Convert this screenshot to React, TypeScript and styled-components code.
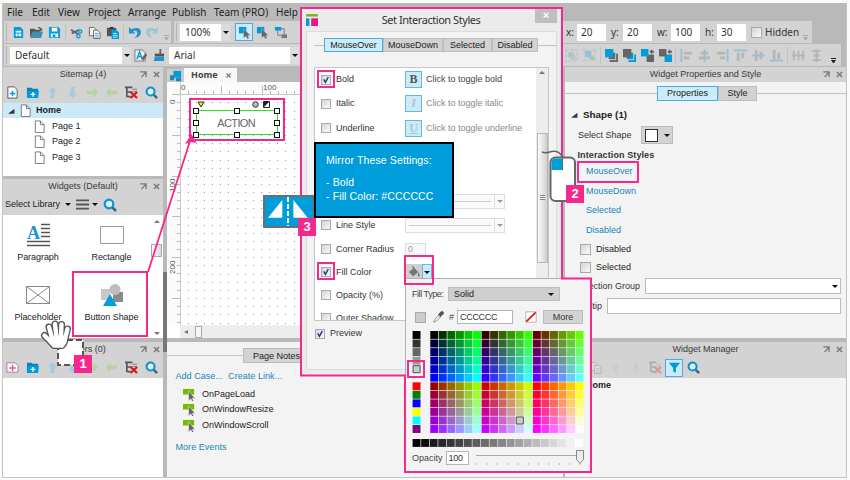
import React from "react";
import styled, { createGlobalStyle, css } from "styled-components";

const PINK = "#f5298c";
const BLUE = "#009ddc";
const GREY = "#d3d3d3";
const BAND = "#b9b9b9";
const PANE = "#f3f3f3";
const INK = "#666";

const Global = createGlobalStyle`
  * { box-sizing: border-box; }
  body { margin: 0; background: #fafafa; font: 9px/11px "Liberation Sans", Arial, sans-serif; color: #333; }
  svg { display: block; flex: none; }
`;

/* ---------- window frame ---------- */
const Page = styled.div`
  position: relative; width: 850px; height: 480px; padding: 3px 3px 2px 2px; overflow: hidden;
`;
const Window = styled.div`
  height: 475px; border: solid #c4c4c4; border-width: 0 1px 1px; background: ${BAND};
  display: flex; flex-direction: column;
`;
const MenuBar = styled.nav`
  height: 18px; display: flex; padding-left: 4px; align-items: center;
  font: 10px/18px "Noto Sans", sans-serif; color: #222;
`;
const MenuItem = styled.span<{ $w: number }>`width: ${p => p.$w}px; white-space: nowrap;`;
const ToolRow = styled.div`height: 23px; display: flex; padding-left: 1px; align-items: flex-start;`;
const ToolGroup = styled.div<{ $w: number; $gap?: number }>`
  width: ${p => p.$w}px; height: 22px; margin-right: ${p => p.$gap || 0}px; background: ${GREY};
  display: flex; align-items: center; overflow: hidden; flex: none;
`;
const Grip = styled.i`width: 1px; height: 18px; margin: 0 2px 0 2px; background: #b4b4b4; flex: none;`;
const Divider = styled.i<{ $w?: number }>`
  width: 1px; height: 17px; margin: 0 ${p => ((p.$w || 4) - 1) / 2}px; background: #c3c3c3; flex: none;
`;
const Slot = styled.span<{ $w?: number; $on?: boolean; $dim?: boolean }>`
  width: ${p => p.$w || 18}px; height: 18px; flex: none; display: flex; align-items: center; justify-content: center;
  opacity: ${p => (p.$dim ? 0.3 : 1)};
  ${p => p.$on && css`border: 1px solid #4fa9e8; background: #cdeaf9;`}
`;
const Combo = styled.div<{ $w: number; $ml?: number }>`
  width: ${p => p.$w}px; height: 17px; margin-left: ${p => p.$ml || 0}px; padding-left: 5px; background: #fff; flex: none;
  display: flex; align-items: center; justify-content: space-between;
  font: 10px/16px "Noto Sans", sans-serif; color: #333;
`;
const ComboEnd = styled.span`
  width: 9px; height: 17px; background: #dcdcdc; display: flex; align-items: center; justify-content: center;
`;
const Caret = styled.i<{ $c?: string }>`
  width: 0; height: 0; border: solid transparent; border-width: 3px 3px 0; border-top-color: ${p => p.$c || "#111"}; flex: none;
`;
const NumLabel = styled.span<{ $w: number }>`
  width: ${p => p.$w}px; font: 10px/16px "Noto Sans", sans-serif; color: #333;
`;
const NumField = styled.span`
  width: 29px; height: 17px; padding-left: 4px; margin-right: 5px; background: #fff;
  font: 10px/16px "Noto Sans", sans-serif; color: #333; flex: none;
`;
const Check = styled.span<{ $s?: number; $mr?: number }>`
  width: ${p => p.$s || 10}px; height: ${p => p.$s || 10}px; margin-right: ${p => p.$mr ?? 5}px;
  border: 1px solid #aaa; background: linear-gradient(135deg, #d4d4d4, #fafafa); flex: none;
  display: flex; align-items: center; justify-content: center;
`;
const Overflow = styled.i`
  width: 5px; margin: 11px auto 0; border-top: 1px solid currentColor; color: #222;
  &::after { content: ""; display: block; margin-top: 1px; border: solid transparent; border-width: 3px 2.5px 0; border-top-color: currentColor; }
`;
const FadedOverflow = styled(Overflow)`color: #aaa;`;

/* ---------- body columns ---------- */
const Body = styled.div`flex: 1; display: grid; grid-template-columns: 160px 4px 396px 2px 281px; min-height: 0;`;
const Column = styled.div`display: flex; flex-direction: column; min-width: 0;`;
const Splitter = styled.div`
  background: ${BAND}; padding-top: 205px;
  &::before { content: ""; display: block; height: 80px; background: #777; }
`;
const Head = styled.div`
  height: 15px; background: ${GREY}; display: grid; grid-template-columns: 1fr auto 1fr;
  line-height: 15px; color: #3a3a3a; flex: none;
`;
const HeadText = styled.span`grid-column: 2; white-space: nowrap;`;
const HeadTools = styled.span`display: flex; gap: 4px; align-items: center; justify-content: flex-end; padding-right: 2px;`;
const Strip = styled.div<{ $h: number }>`
  height: ${p => p.$h}px; background: ${GREY}; display: flex; align-items: center; flex: none;
`;
const Band = styled.div<{ $h?: number }>`height: ${p => p.$h || 3}px; background: ${BAND}; flex: none;`;
const White = styled.div<{ $h: number }>`height: ${p => p.$h}px; background: #fff; flex: none;`;
const TreeRow = styled.div<{ $sel?: boolean }>`
  height: ${p => (p.$sel ? 15 : 15.5)}px; padding-left: ${p => (p.$sel ? 4 : 30)}px; display: flex; align-items: center; gap: ${p => (p.$sel ? 4 : 6)}px;
  background: ${p => (p.$sel ? "#cbe9f7" : "none")}; font-weight: ${p => (p.$sel ? "bold" : "normal")}; color: #222;
`;
const Tree = styled.div`display: flex; flex-direction: column;`;
const TreePages = styled.div`padding-top: .5px;`;
const Library = styled.div`height: 123px; display: grid; grid-template-columns: 147px 13px; background: #fff; flex: none;`;
const WidgetGrid = styled.div`display: grid; grid-template-columns: 70px 77px; grid-template-rows: 60px 60px; padding-top: 6px;`;
const WidgetCell = styled.div`
  display: flex; flex-direction: column; align-items: center; white-space: nowrap; color: #222; letter-spacing: -.05px;
`;
const WidgetArt = styled.div`height: 28px; display: flex; align-items: center; margin-bottom: 3px;`;
const LibScroll = styled.div`
  display: flex; flex-direction: column; align-items: center; justify-content: space-between; padding: 5px 0 6px;
`;
const LibThumb = styled.i`width: 11px; height: 13px; border: 1px solid #aaa; background: linear-gradient(90deg, #fff, #d8d8d8); margin-bottom: 55px;`;
const UpCaret = styled(Caret)`transform: rotate(180deg);`;
const StripText = styled.span`padding: 0 5px 0 2px; color: #222; white-space: nowrap;`;

/* ---------- canvas ---------- */
const DocTabs = styled.div`height: 15px; background: ${BAND}; display: flex; align-items: flex-end;`;
const DocHome = styled.div`width: 17px; height: 13px; background: #ccc; display: flex; align-items: center; justify-content: center;`;
const DocTab = styled.div`
  width: 53px; height: 14px; background: #f8f8f8; padding: 0 5px 0 7px; display: flex; align-items: center; justify-content: space-between;
  font: bold 9px/14px "Noto Sans", sans-serif; color: #444;
`;
const CanvasArea = styled.div`height: 243px; background: #fff;`;
const HScroll = styled.div`
  height: 13px; margin-left: 13px; background: #ededed; display: flex; align-items: center; padding-left: 4px; gap: 7px;
`;
const HWrap = styled.div`background: #fff;`;
const HThumb = styled.i`width: 7px; height: 12px; border: 1px solid #aaa; background: #f6f6f6;`;
const LeftCaret = styled.i`border: solid transparent; border-width: 2.5px 4px 2.5px 0; border-right-color: #777;`;
const Notes = styled.div`flex: 1; background: ${PANE}; padding-top: 6px;`;
const NotesTab = styled.div`
  width: 62px; height: 15px; margin-left: 76px; border: 1px solid #bbb; background: ${GREY}; padding-left: 9px; line-height: 14px; white-space: nowrap; color: #222;
`;
const NotesLine = styled.div`display: flex; align-items: center; height: 15px; background: linear-gradient(#c8c8c8, #c8c8c8) 0 7px / 100% 1px no-repeat;`;
const Links = styled.div<{ $mt: number }>`margin: ${p => p.$mt}px 0 0 8.5px; display: flex; gap: 5px; color: #1685bd; letter-spacing: .05px;`;
const Events = styled.div`padding: 5px 0 0 16px;`;
const EventRow = styled.div`height: 15.5px; display: flex; align-items: center; gap: 6px; color: #222;`;

/* ---------- right column ---------- */
const Props = styled.div`height: 256px; background: ${PANE}; padding-top: 4px; flex: none;`;
const Tabs = styled.div<{ $l: number; $r: number }>`
  display: grid; grid-template-columns: ${p => p.$l}px auto ${p => p.$r}px; align-items: center;
  &::before, &::after { content: ""; height: 1px; background: #c2c2c2; }
`;
const TabSet = styled.div`display: flex;`;
const Tab = styled.span<{ $w: number; $h: number; $on?: boolean }>`
  width: ${p => p.$w}px; height: ${p => p.$h}px; line-height: ${p => p.$h - 2}px; text-align: center; color: #222;
  border: 1px solid ${p => (p.$on ? "#3fb0e0" : "#bdbdbd")}; background: ${p => (p.$on ? "#cdebf8" : "#d2d2d2")};
`;
const Section = styled.div`
  height: 12px; margin: 8px 0 0 5px; display: flex; align-items: center; gap: 5px; font: bold 9.8px/12px "Liberation Sans", sans-serif; color: #222;
`;
const ShapeRow = styled.div`margin: 5px 0 0 13px; display: flex; align-items: center; gap: 9px; height: 18px;`;
const ShapeBtn = styled.div`
  width: 32px; height: 18px; border: 1px solid #bbb; background: ${GREY}; display: flex; align-items: center; justify-content: space-between; padding: 0 2px 0 3px;
`;
const ShapeBox = styled.i`width: 13px; height: 13px; border: 1px solid #333; background: #fff;`;
const SubHead = styled.div`margin: 5px 0 0 12.5px; font-weight: bold; line-height: 12px; letter-spacing: .1px;`;
const LinkList = styled.div`padding: 1px 0 0 21px; color: #1685bd;`;
const LinkItem = styled.div`height: 19.6px; line-height: 19.6px;`;
const CheckRow = styled.div`height: 18px; padding-left: 15px; display: flex; align-items: center; color: #222;`;
const FieldRow = styled.div<{ $label: number }>`
  height: 20px; display: grid; grid-template-columns: ${p => p.$label}px 1fr; padding-right: 5px; align-items: center; column-gap: 5px; text-align: right;
`;
const Field = styled.div`height: 16px; border: 1px solid #bbb; background: #fff; display: flex; align-items: center; justify-content: flex-end; padding-right: 2px;`;
const Manager = styled.div`flex: 1; background: ${PANE}; padding: 2px 0 0 21px; font-weight: bold; color: #222;`;

/* ---------- dialog ---------- */
const Dialog = styled.section`
  position: absolute; left: 301px; top: 8px; width: 261px; height: 368px; background: #ebebeb; padding-left: 5px;
`;
const TitleBar = styled.header`height: 23px; display: grid; grid-template-columns: 13px 1fr 22px 5px; align-items: center;`;
const Title = styled.h1`margin: 0; padding-left: 8px; font: 11px/22px "Noto Sans", sans-serif; letter-spacing: -.45px; color: #333; text-align: center;`;
const Close = styled.span`align-self: start; height: 15px; background: #bfbfbf; color: #fff; font: bold 11px/14px "Liberation Sans", sans-serif; text-align: center;`;
const Inner = styled.div`width: 251px; height: 339px; border: 1px solid #dcdcdc; background: ${PANE}; padding: 6px 0 0 7px;`;
const StyleList = styled.div`
  width: 235px; height: 254px; margin-top: 14.5px; border: 1px solid #c6c6c6; background: #fff; overflow: hidden;
  display: grid; grid-template-columns: 1fr 12px;
`;
const OptRows = styled.div``;
const OptRow = styled.div<{ $h?: number }>`
  height: ${p => p.$h || 24.3}px; display: grid; grid-template-columns: 21px 69px 1fr; align-items: center; white-space: nowrap;
`;
const OptCheck = styled.span`padding-left: 6px;`;
const OptValue = styled.span<{ $dim?: boolean }>`display: flex; align-items: center; gap: 4px; color: ${p => (p.$dim ? "#888" : "#444")};`;
const Toggle = styled.b<{ $dim?: boolean }>`
  width: 17px; height: 17px; border: 1px solid #5fb9e2; background: #cdeaf6; color: ${p => (p.$dim ? "#a5c9d6" : "#555")};
  font: bold 12px/15px "Liberation Serif", serif; text-align: center;
`;
const LineSelect = styled.span`
  width: 100px; height: 15px; border: 1px solid #ddd; background: #fafafa; display: grid; grid-template-columns: 1fr 10px; align-items: center; padding-left: 3px; column-gap: 3px;
  &::before { content: ""; height: 1px; background: #ccc; }
`;
const LineEnd = styled.span`height: 13px; border-left: 1px solid #ddd; display: flex; align-items: center; justify-content: center;`;
const Radius = styled.span`width: 21px; height: 13px; border: 1px solid #ddd; background: #f8f8f8; padding-left: 2px; color: #999; line-height: 11px;`;
const FillBtn = styled.span`width: 27px; height: 16px; background: #cfcfcf; display: flex; align-items: center; justify-content: space-between; padding-left: 3px;`;
const FillDrop = styled.span`width: 10px; height: 16px; border: 1px solid #5fb9e2; background: #cdeaf6; display: flex; align-items: center; justify-content: center;`;
const Track = styled.div`background: #ededed; display: flex; flex-direction: column; align-items: center; padding-top: 3px;`;
const Thumb = styled.i`
  width: 11px; height: 130px; margin-top: 59px; border: 1px solid #b5b5b5; background: linear-gradient(90deg, #fafafa, #d0d0d0); display: flex; align-items: center; justify-content: center;
  &::after { content: ""; width: 5px; height: 5px; background: repeating-linear-gradient(#888 0 1px, #eee 1px 2px); }
`;
const Preview = styled.div`height: 26px; display: flex; align-items: center; padding-left: 1px;`;

/* ---------- colour popup ---------- */
const Popup = styled.section`
  position: absolute; left: 405px; top: 278px; width: 186px; height: 194px; border: 1px solid #b0b0b0; background: ${PANE}; padding: 8px 6px 0 6px;
`;
const PopRow = styled.div<{ $h: number; $mb: number }>`height: ${p => p.$h}px; margin-bottom: ${p => p.$mb}px; display: flex; align-items: center; color: #444;`;
const PopLabel = styled.span`width: 36px; letter-spacing: -.45px; padding-top: 1px; white-space: nowrap; flex: none;`;
const Spacer = styled.i<{ $w: number }>`width: ${p => p.$w}px; flex: none;`;
const Solid = styled.span`
  width: 112px; height: 14px; border: 1px solid #bdbdbd; background: #cfcfcf; display: flex; align-items: center; justify-content: space-between; padding: 0 5px; color: #222; flex: none;
`;
const Swatch = styled.i`width: 11px; height: 11px; border: 1px solid #aaa; background: #ccc;`;
const PopInput = styled.span<{ $w: number }>`width: ${p => p.$w}px; height: 14px; border: 1px solid #b5b5b5; background: #fff; padding-left: 2px; line-height: 12px; color: #333; letter-spacing: -.3px;`;
const More = styled.span`width: 40px; height: 14px; border: 1px solid #bbb; background: ${GREY}; line-height: 12px; text-align: center; color: #333;`;

/* ---------- callouts ---------- */
const Outline = styled.i<{ $x: number; $y: number; $w: number; $h: number }>`
  position: absolute; left: ${p => p.$x}px; top: ${p => p.$y}px; width: ${p => p.$w}px; height: ${p => p.$h}px; border: 2px solid ${PINK};
`;
const Badge = styled.b<{ $x: number; $y: number }>`
  position: absolute; left: ${p => p.$x}px; top: ${p => p.$y}px; width: 18px; height: 18px; background: ${PINK};
  color: #fff; font: bold 13px/18px "Liberation Sans", sans-serif; text-align: center;
`;
const Note = styled.aside`
  position: absolute; left: 314px; top: 142px; width: 140px; height: 76px; border: 2px solid #000; background: ${BLUE}; padding: 9px 0 0 10px;
  color: #fff; font: 10.5px/14px "Liberation Sans", sans-serif; letter-spacing: .12px;
  p { margin: 0 0 8px; }
`;
const Marks = styled.svg`position: absolute; left: 0; top: 0;`;

/* ---------- icons, drawn on a 14-unit square ---------- */
const art: Record<string, React.ReactNode> = {
  new: <><path d="M2 1h7l3 3v9H2z" fill={BLUE} /><path d="M4 5h6v2H4zM4 8h2v3H4zM7 8h3v3H7z" fill="#fff" /></>,
  open: <><path d="M0 3h5l1 1h5v3H3l-3 5z" fill="#555" /><path d="M3 6h11l-2 7H0z" fill="#3f8fb4" /><path d="M8 2q3-2 4 1l1-1v3h-3l1-1q-1-2-3-2" fill="#555" /></>,
  save: <><path d="M1 1h10l2 2v10H1z" fill={BLUE} /><path d="M4 2h6v4H4zM3 8h8v4H3z" fill="#fff" /><path d="M5 9h3v3H5z" fill={BLUE} /></>,
  cut: <><path d="M1 4l8 5M2 8l8-4" stroke={INK} strokeWidth="2" /><g fill="none" stroke="#209fd5" strokeWidth="1.6"><circle cx="11" cy="6" r="1.7" /><circle cx="9" cy="11" r="1.8" /></g></>,
  copy: <g fill="#f5f5f5" stroke={INK}><path d="M1.500 1.500h5l2 2v7h-7z" /><path d="M6 4.500h4l3 3v6H6z" /><path d="M7.500 8h4M7.500 10h4M7.500 12h4" stroke="#55a9cf" /></g>,
  paste: <><path d="M1 2h10v9H1z" fill="#555" /><path d="M4 1h4v2H4z" fill="#333" /><path d="M6 4h5l3 3v7H6z" fill={BLUE} /><path d="M7.500 8h4M7.500 10h5M7.500 12h5" stroke="#bde6f8" /></>,
  undo: <path d="M1 1v7h7L5.500 5.500Q10 4 10 8q0 2-3 5 7-1 7-6.500Q13 0 3.500 3.500z" fill="#2392c8" />,
  redo: <path d="M13 1v7H6l2.500-2.500Q4 4 4 8q0 2 3 5-7-1-7-6.500Q1 0 10.500 3.500z" fill="#9fc4d4" />,
  pick: <><path d="M1 1h8v7H1z" fill={BLUE} /><path d="M6 3v10l2.500-2 1.500 3 2-1-1.500-2.800H13.500z" fill="#666" stroke={GREY} strokeWidth=".4" /></>,
  flow: <g><path d="M1 1h7v4H1z" fill={BLUE} /><path d="M8 9h6v4H8z" fill="#777" /><path d="M4 5v5h4M8 3h3v6" stroke="#777" fill="none" /></g>,
  styleA: <><path d="M1 1h8l3 3v9H1z" fill="#eee" stroke="#777" /><path d="M3 11l3-8 3 8M4 8h4" stroke={BLUE} strokeWidth="1.500" fill="none" /><path d="M8 10l5-6 1 3-4 6z" fill="#666" /></>,
  brush: <><path d="M8 0h2v6H8z" fill="#666" /><path d="M3 5h10v3H3z" fill="#555" /><path d="M3 8h10v5H2z" fill="#2195c9" /></>,
  addPage: <><path d="M2 1h7l3 3v9H2z" fill="#fff" stroke="#555" /><path d="M7 5v6M4 8h6" stroke={BLUE} strokeWidth="1.600" /></>,
  addMaster: <><path d="M1 2h9l3 3v7H1z" fill="#fff" stroke="#b27196" /><path d="M7 4v7M3.500 7.500h7" stroke="#dc58a2" strokeWidth="1.600" /></>,
  addFolder: <><path d="M1 2h5l1 1h6v9H1z" fill="#167fb0" /><path d="M2 5h12l-1 8H1z" fill={BLUE} /><path d="M7.500 6.500v5M5 9h5" stroke="#fff" strokeWidth="1.400" /></>,
  up: <path d="M7 1l5 5H9v7H5V6H2z" fill="#a3cbdc" />,
  down: <path d="M7 13L2 8h3V1h4v7h3z" fill="#a3cbdc" />,
  right: <path d="M13 7L8 12V9H1V5h7V2z" fill="#b5d3a0" />,
  left: <path d="M1 7l5-5v3h7v4H6v3z" fill="#b5d3a0" />,
  del: <><path d="M0 1.500h8M2 2v10M3 6.500h5M3 11.500h3" stroke="#555" strokeWidth="1.800" /><path d="M8 3.500h5M9 6h4" stroke="#777" /><path d="M6 6.500l7 6.500M13 6.500L6 13" stroke="#d8171b" strokeWidth="2.300" /></>,
  find: <><circle cx="6" cy="6" r="4.300" fill="#dff2fa" stroke="#0a93d0" strokeWidth="2.200" /><path d="M9.500 9.500L13 13" stroke="#386a82" strokeWidth="2.600" /></>,
  funnel: <path d="M1 2h12L8.500 7.500V13l-3-2V7.500z" fill={BLUE} />,
  page: <path d="M2.500 1h5.500l4 4v8.500H2.500z M8 1v4h4" fill="#fff" stroke="#777" />,
  twisty: <path d="M13 3v9H2z" fill="#333" />,
  float: <path d="M3 3h8v8M11 3l-7 8M2 3h9" stroke="#777" strokeWidth="2" fill="none" />,
  close: <path d="M3 3l8 8M11 3l-8 8" stroke="#777" strokeWidth="2.200" />,
  lines: <path d="M0 2.500h14M0 7h14M0 11.500h14" stroke="#555" strokeWidth="2" />,
  front: <><path d="M5 5h9v9H5z" fill={INK} /><path d="M3 3h9v9H3z" fill={GREY} /><path d="M4 4h7v7H4z" fill={INK} /><path d="M0 0h9v9H0z" fill={BLUE} /></>,
  back: <><path d="M6 6h8v8H6z" fill={BLUE} /><path d="M3 3h9v9H3z" fill={GREY} /><path d="M4 4h7v7H4z" fill={BLUE} /><path d="M0 0h9v9H0z" fill={INK} /></>,
  fwd: <><path d="M6 6h8v8H6z" fill={INK} /><path d="M0 0h8v8H0z" fill={BLUE} /><path d="M9 3l3-3v2h2v2h-2v2z" fill={INK} /></>,
  bwd: <><path d="M6 6h8v8H6z" fill={BLUE} /><path d="M0 0h8v8H0z" fill={INK} /><path d="M9 3l3-3v2h2v2h-2v2z" fill={INK} /></>,
  group: <g fill="none" stroke="#6fa9bf"><path d="M1 1h12v12H1z" strokeDasharray="3 2" strokeWidth="1.500" /><path d="M4 4h5v5H4z" fill={BLUE} /><path d="M7 7h4v4H7z" fill="#999" /></g>,
  ungroup: <g><path d="M2 2h7v7H2z" fill={BLUE} /><path d="M7 7h5v5H7z" fill="#888" /><path d="M0 1h3M0 12h4M10 1h4v4M13 9v4" stroke="#6fa9bf" fill="none" strokeWidth="1.500" /></g>,
  alL: <><path d="M1.500 0v14" stroke={BLUE} strokeWidth="2" /><path d="M4 3h9v3H4zM4 8h6v3H4z" fill="#777" /></>,
  alC: <><path d="M7 0v14" stroke={BLUE} strokeWidth="2" /><path d="M3 3h8v3H3zM1 8h12v3H1z" fill="#777" /></>,
  alR: <><path d="M12.500 0v14" stroke={BLUE} strokeWidth="2" /><path d="M1 3h9v3H1zM4 8h6v3H4z" fill="#777" /></>,
  alT: <><path d="M0 1.500h14" stroke={BLUE} strokeWidth="2" /><path d="M3 4h3v9H3zM8 4h3v6H8z" fill="#777" /></>,
  alM: <><path d="M0 7h14" stroke={BLUE} strokeWidth="2" /><path d="M3 1h3v12H3zM8 3h3v8H8z" fill="#777" /></>,
  alB: <><path d="M0 12.500h14" stroke={BLUE} strokeWidth="2" /><path d="M3 1h3v10H3zM8 4h3v7H8z" fill="#777" /></>,
  diH: <><path d="M2 2v10M12 2v10" stroke="#777" strokeWidth="2" /><path d="M0 7h14M7 2v10" stroke="#777" strokeWidth="2" /></>,
  diV: <><path d="M2 2h10M2 12h10" stroke="#777" strokeWidth="2" /><path d="M7 0v14M4 7h6" stroke="#777" strokeWidth="2.500" /></>,
  tick: <path d="M3 6l3 5 5-9" stroke="#2b2b86" strokeWidth="2.400" fill="none" />,
  bucket: <><path d="M1 7l6-5 5 5-6 5z" fill="#777" /><path d="M5 0l4 6" stroke="#777" strokeWidth="1.500" /><path d="M12 7q2 3 1.500 5h-2z" fill="#666" /></>,
  dropper: <><path d="M2 13l1-3 5-5 2 2-5 5z" fill="#eee" stroke="#888" /><path d="M7 4l4-4q3 0 3 3l-4 4z" fill="#555" /></>,
  noFill: <><path d="M1 1h12v12H1z" fill="#fff" stroke="#aaa" /><path d="M1.500 12.500l11-11" stroke="#e0181c" strokeWidth="2" /></>,
  event: <><path d="M0 1h12v6H0z" fill="#6fbe00" /><path d="M6 3v11l2.500-2.300 1.500 3 1.500-.8-1.400-2.900H13z" fill="#666" stroke="#eee" strokeWidth=".6" /></>,
  docHome: <><path d="M4 1h9v8H4z" fill={BLUE} /><path d="M0 6h5v6H0zM7 9h6v4H7z" fill="#2786b0" /></>,
  logo: <><path d="M0 0h14v3H0z" fill="#76b82a" /><path d="M0 5h4v9H0z" fill={BLUE} /><path d="M6 5h8v9H6z" fill="#ed1489" /></>,
};
const Icon = ({ n, s = 13 }: { n: string; s?: number }) => (
  <svg width={s} height={s} viewBox="0 0 14 14" fill="none">{art[n]}</svg>
);
const Icons = ({ names, w, dim }: { names: string; w?: number; dim?: boolean }) => (
  <>{names.split(" ").map((n, i) => <Slot key={i} $w={w} $dim={dim}><Icon n={n} /></Slot>)}</>
);

const PanelHead = ({ children }: { children: React.ReactNode }) => (
  <Head><HeadText>{children}</HeadText><HeadTools><Icon n="float" s={9} /><Icon n="close" s={9} /></HeadTools></Head>
);

const CheckBox = ({ on, s, mr }: { on?: boolean; s?: number; mr?: number }) => (
  <Check $s={s} $mr={mr}>{on && <Icon n="tick" s={8} />}</Check>
);

const Option = ({ label, on, h, dim, children }: { label?: string; on?: boolean; h?: number; dim?: boolean; children?: React.ReactNode }) => (
  <OptRow $h={h}>
    <OptCheck><CheckBox on={on} mr={0} /></OptCheck><span>{label}</span><OptValue $dim={dim}>{children}</OptValue>
  </OptRow>
);

/* ---------- drawing surface: rulers, dot grid and the selected shape ---------- */
const UNIT = 8.15;
const range = (n: number) => Array.from({ length: n }, (_, i) => i);
const Surface = () => (
  <svg width="396" height="243" viewBox="167 82 396 243" shapeRendering="crispEdges">
    <path d="M167 82h396v12H167zM167 82h13v243h-13z" fill="#fbfbfb" />
    <path d="M180.500 82v243M180 94.500h383" stroke="#c8c8c8" />
    {range(16).map(i => <path key={i} d={`M${Math.round(180 + i * UNIT)}.5 ${i % 5 ? 91 : 86}v${i % 5 ? 3 : 8}`} stroke="#bbb" />)}
    {range(29).map(i => <path key={i} d={`M${i % 5 ? 177 : 172} ${Math.round(94 + i * UNIT)}.5h${i % 5 ? 3 : 8}`} stroke="#bbb" />)}
    {range(28).map(r => range(15).map(c => (
      <rect key={`${r}-${c}`} x={Math.round(179.500 + (c + 1) * UNIT)} y={Math.round(94.300 + (r + 1) * UNIT)} width="1" height="1" fill="#8d8df0" />
    )))}
    <g fontFamily="Liberation Sans" fontSize="8" fill="#555">
      <text x="181" y="90">0</text><text x="263" y="90">100</text>
      <text transform="translate(175 104) rotate(-90)">0</text>
      <text transform="translate(175 192) rotate(-90)">100</text>
      <text transform="translate(175 274) rotate(-90)">200</text>
    </g>
    <path d="M196.500 110.500h81v24h-81z" fill="#fff" stroke="#2be02b" />
    <text x="236.500" y="126.500" textAnchor="middle" fontFamily="Liberation Sans" fontSize="11" textLength="38.500" fill="#666" shapeRendering="auto">ACTION</text>
    {[[196, 110], [237, 110], [277, 110], [196, 122], [277, 122], [196, 134], [237, 134], [277, 134]].map(([x, y]) => (
      <rect key={`${x}-${y}`} x={x - 2.500} y={y - 2} width="5" height="5" fill="#fff" stroke="#111" />
    ))}
    <g shapeRendering="auto">
      <path d="M198 102h6l-3 5z" fill="#fd0" stroke="#333" />
      <circle cx="255.500" cy="104.500" r="2.800" fill="#bbb" stroke="#333" />
      <path d="M263.500 101.500h6v6h-6z" fill="#fff" stroke="#222" /><path d="M264 107v-5h5z" fill="#222" />
    </g>
  </svg>
);

/* ---------- colour palette: web-safe cubes plus quick swatches and greys ---------- */
const CELL = 8.550;
const quick = ["#000", "#333", "#666", "#999", "#ccc", "", "#f00", "#008000", "#00f", "#ff0", "#0ff", "#800080"];
const Palette = () => (
  <svg width="172" height="117" viewBox="0 0 172 117">
    {quick.map((c, i) => c && <rect key={i} x=".6" y={i * CELL} width="7.900" height="7.900" fill={c} />)}
    {range(12).map(r => range(18).map(c => {
      const red = (Math.floor(c / 6) + (r > 5 ? 3 : 0)) * 51;
      return <rect key={`${r}-${c}`} x={18.300 + c * CELL} y={r * CELL} width="7.900" height="7.900" fill={`rgb(${red},${(c % 6) * 51},${(r % 6) * 51})`} />;
    }))}
    {range(20).map(i => { const v = Math.round(i * 13.4); return <rect key={i} x={.6 + i * CELL} y="108" width="7.900" height="7.900" fill={`rgb(${v},${v},${v})`} />; })}
    <path d="M1.100 34.700h7v7h-7zM104.300 86h7v7h-7z" fill="#ccc" stroke="#555" />
  </svg>
);

const Slider = () => (
  <svg width="110" height="18" viewBox="475 448 110 18">
    <path d="M477 454.500h104" stroke="#aaa" />
    {range(11).map(i => <path key={i} d={`M${477.500 + i * 10.350} 462v2`} stroke="#bbb" />)}
    <path d="M577.500 449.500h7v9l-3.500 4-3.500-4z" fill="#ececec" stroke="#888" />
  </svg>
);

/* ---------- open hand: the same strokes laid twice, outline then fill ---------- */
const HandShape = ({ color, w }: { color: string; w: number }) => (
  <g stroke={color} strokeWidth={w} strokeLinecap="round" strokeLinejoin="round" fill={color}>
    <path d="M44.500 335.500L52 343M49 327l3 11M55 324l1.500 13M61.500 324.500L61 337M67.500 329l-2.500 10" fill="none" />
    <path d="M52.500 338h12.500q0 5-3 7.500H54q-2-2-3.500-4z" />
  </g>
);

const widgets: [string, React.ReactNode][] = [
  ["Paragraph", <svg width="24" height="24" viewBox="0 0 24 24"><text x="1" y="15.500" fontFamily="Liberation Serif" fontWeight="bold" fontSize="18" textLength="13" lengthAdjust="spacingAndGlyphs" fill="#1597d1">A</text><path d="M15 1.500h9M15 5.500h9M15 9.500h9M15 13.500h9M1 18.500h23M1 22.500h23" stroke="#555" strokeWidth="1.500" /></svg>],
  ["Rectangle", <svg width="24" height="18"><path d="M.5.5h23v17H.5z" fill="#fff" stroke="#999" /></svg>],
  ["Placeholder", <svg width="24" height="18"><path d="M.5.5h23v17H.5zL23.500 17.500M23.500.5L.5 17.500" fill="#fff" stroke="#888" /></svg>],
  ["Button Shape", <svg width="24" height="24" viewBox="0 0 24 24"><path d="M1 6h9v11H1z" fill="#c8c8c8" /><path d="M13 9h10v10H13z" fill="#8a8a8a" /><circle cx="15" cy="6.500" r="5.500" fill="#bdbdbd" /><path d="M10 11l7 12H3z" fill={BLUE} /></svg>],
];

export default function App() {
  return (
    <Page>
      <Global />
      <Window>
        <MenuBar>
          {([["File", 25], ["Edit", 26], ["View", 30], ["Project", 40], ["Arrange", 44], ["Publish", 42], ["Team (PRO)", 62], ["Help", 30]] as [string, number][]).map(([t, w]) => <MenuItem key={t} $w={w}>{t}</MenuItem>)}
        </MenuBar>
        <ToolRow>
          <ToolGroup $w={167} $gap={3}>
            <Grip /><Icons names="new open save" /><Divider $w={4.5} /><Icons names="cut copy paste" /><Divider /><Icons names="undo redo" /><FadedOverflow />
          </ToolGroup>
          <ToolGroup $w={383} $gap={3}>
            <Grip />
            <Combo $w={50} $ml={1}>100%<ComboEnd><Caret /></ComboEnd></Combo><Spacer $w={5} />
            <Slot $on><Icon n="pick" /></Slot><Icons names="pick flow" />
          </ToolGroup>
          <ToolGroup $w={252}>
            <Spacer $w={6} />
            <NumLabel $w={11}>x:</NumLabel><NumField>20</NumField>
            <NumLabel $w={12}>y:</NumLabel><NumField>20</NumField>
            <NumLabel $w={14}>w:</NumLabel><NumField>100</NumField>
            <NumLabel $w={12}>h:</NumLabel><NumField>30</NumField>
            <CheckBox s={11} mr={3} /><NumLabel $w={34}>Hidden</NumLabel><FadedOverflow />
          </ToolGroup>
        </ToolRow>
        <ToolRow>
          <ToolGroup $w={556}>
            <Grip /><Combo $w={121} $ml={1}>Default<ComboEnd><Caret /></ComboEnd></Combo>
            <Icons names="styleA brush" w={18.5} />
            <Combo $w={130} $ml={1}>Arial<ComboEnd><Caret /></ComboEnd></Combo>
          </ToolGroup>
          <ToolGroup $w={281}>
            <Spacer $w={2} /><Icons names="group ungroup" dim /><Divider />
            <Icons names="front back fwd bwd" /><Divider $w={3.5} />
            <Icons names="alL alC alR alT alM alB" dim /><Divider /><Icons names="diH diV" dim /><Overflow />
          </ToolGroup>
        </ToolRow>
        <Body>
          <Column>
            <PanelHead>Sitemap (4)</PanelHead>
            <Strip $h={21}><Icons names="addPage addFolder up down right left del find" w={19.8} /></Strip>
            <White $h={73}>
              <Tree>
                <TreeRow $sel><Icon n="twisty" s={8} /><Icon n="page" s={13} />Home</TreeRow>
                <TreePages>{[1, 2, 3].map(i => <TreeRow key={i}><Icon n="page" />Page {i}</TreeRow>)}</TreePages>
              </Tree>
            </White>
            <Band />
            <PanelHead>Widgets (Default)</PanelHead>
            <Strip $h={21}>
              <StripText>Select Library</StripText><Caret /><Spacer $w={5} /><Icon n="lines" /><Spacer $w={3} /><Caret /><Spacer $w={5} /><Icon n="find" s={14} />
            </Strip>
            <Library>
              <WidgetGrid>{widgets.map(([t, a]) => <WidgetCell key={t}><WidgetArt>{a}</WidgetArt>{t}</WidgetCell>)}</WidgetGrid>
              <LibScroll><UpCaret $c="#777" /><LibThumb /><Caret $c="#777" /></LibScroll>
            </Library>
            <Band $h={4} />
            <PanelHead>Masters (0)</PanelHead>
            <Strip $h={21}><Icons names="addMaster addFolder up down right left del find" w={19.8} /></Strip>
            <White $h={99} />
          </Column>
          <Splitter />
          <Column>
            <DocTabs><DocHome><Icon n="docHome" s={12} /></DocHome><DocTab>Home<Icon n="close" s={7} /></DocTab></DocTabs>
            <CanvasArea><Surface /></CanvasArea>
            <HWrap><HScroll><LeftCaret /><HThumb /></HScroll></HWrap>
            <Band $h={4} />
            <Notes>
              <NotesLine><NotesTab>Page Notes</NotesTab></NotesLine>
              <Links $mt={7.5}><span>Add Case...</span><span>Create Link...</span></Links>
              <Events>{["OnPageLoad", "OnWindowResize", "OnWindowScroll"].map(t => <EventRow key={t}><Icon n="event" />{t}</EventRow>)}</Events>
              <Links $mt={9}><span>More Events</span></Links>
            </Notes>
          </Column>
          <Band $h={410} />
          <Column>
            <PanelHead>Widget Properties and Style</PanelHead>
            <Props>
              <Tabs $l={92} $r={89}><TabSet><Tab $w={61} $h={15} $on>Properties</Tab><Tab $w={39} $h={15}>Style</Tab></TabSet></Tabs>
              <Section><Icon n="twisty" s={8} />Shape (1)</Section>
              <ShapeRow>Select Shape<ShapeBtn><ShapeBox /><Caret /></ShapeBtn></ShapeRow>
              <SubHead>Interaction Styles</SubHead>
              <LinkList>{["MouseOver", "MouseDown", "Selected", "Disabled"].map(t => <LinkItem key={t}>{t}</LinkItem>)}</LinkList>
              <CheckRow><CheckBox s={11} />Disabled</CheckRow>
              <CheckRow><CheckBox s={11} />Selected</CheckRow>
              <FieldRow $label={75}><span>Selection Group</span><Field><Caret /></Field></FieldRow>
              <FieldRow $label={37}><span>Tooltip</span><Field /></FieldRow>
            </Props>
            <Band $h={4} />
            <PanelHead>Widget Manager</PanelHead>
            <Strip $h={21}>
              <Spacer $w={20} /><Icons names="copy up down del" w={20} dim /><Slot $on><Icon n="funnel" /></Slot><Icons names="find" w={20} />
            </Strip>
            <Manager>Home</Manager>
          </Column>
        </Body>
      </Window>

      <Dialog>
        <TitleBar><Icon n="logo" s={12} /><Title>Set Interaction Styles</Title><Close>×</Close></TitleBar>
        <Inner>
          <Tabs $l={10} $r={19}>
            <TabSet><Tab $w={59} $h={14} $on>MouseOver</Tab><Tab $w={60} $h={14}>MouseDown</Tab><Tab $w={49} $h={14}>Selected</Tab><Tab $w={46} $h={14}>Disabled</Tab></TabSet>
          </Tabs>
          <StyleList>
            <OptRows>
              <Option label="Bold" on><Toggle>B</Toggle>Click to toggle bold</Option>
              <Option label="Italic" dim><Toggle $dim><i>I</i></Toggle>Click to toggle italic</Option>
              <Option label="Underline" dim><Toggle $dim><u>U</u></Toggle>Click to toggle underline</Option>
              <OptRow $h={48.6} />
              <Option><LineSelect><LineEnd><Caret $c="#999" /></LineEnd></LineSelect></Option>
              <Option label="Line Style"><LineSelect><LineEnd><Caret $c="#999" /></LineEnd></LineSelect></Option>
              <Option label="Corner Radius" h={23}><Radius>0</Radius></Option>
              <Option label="Fill Color" h={23} on><FillBtn><Icon n="bucket" s={12} /><FillDrop><Caret /></FillDrop></FillBtn></Option>
              <Option label="Opacity (%)" h={23} />
              <Option label="Outer Shadow" h={23} />
            </OptRows>
            <Track><UpCaret $c="#777" /><Thumb /></Track>
          </StyleList>
          <Preview><CheckBox on />Preview</Preview>
        </Inner>
      </Dialog>

      <Popup>
        <PopRow $h={14} $mb={9}><PopLabel>Fill Type:</PopLabel><Solid>Solid<Caret /></Solid></PopRow>
        <PopRow $h={14} $mb={7}>
          <Spacer $w={3} /><Swatch /><Spacer $w={6} /><Icon n="dropper" s={12} /><Spacer $w={5} />#<Spacer $w={3} />
          <PopInput $w={56}>CCCCCC</PopInput><Spacer $w={12} /><Icon n="noFill" s={12} /><Spacer $w={6} /><More>More</More>
        </PopRow>
        <Palette />
        <PopRow $h={20} $mb={0}>Opacity<Spacer $w={3} /><PopInput $w={25}>100</PopInput><Spacer $w={5} /><Slider /></PopRow>
      </Popup>

      <Marks width="850" height="480" fill="none">
        <path d="M301 8H562V278.500H591V472H405V375.500H301Z" stroke={PINK} strokeWidth="2" />
        <path d="M148 272L190 141" stroke={PINK} strokeWidth="1.800" />
        <path d="M191.500 134l5 9-5.500-1-6 2z" fill={PINK} />
        {/* mirror glyph */}
        <path d="M264 196h50v31h-50z" fill={BLUE} stroke="#6e6e6e" strokeWidth="2" />
        <path d="M268 217.700h14.300V200zM307.700 217.700h-14.300V200z" fill="#fff" />
        <path d="M288 197v29" stroke="#fff" strokeWidth="2" strokeDasharray="5 2" />
        {/* mouse */}
        <path d="M542 152q4 1.500 9.500-.5 8-1 10.500 5" stroke={INK} strokeWidth="1.500" />
        <rect x="550.500" y="157.500" width="24.500" height="43.500" rx="5" fill="#fff" stroke={INK} strokeWidth="2" />
        <path d="M551.500 170v-8q0-3.500 4-3.500h6.500V170z" fill={BLUE} /><path d="M562.500 158v12" stroke={INK} />
        {/* dragging hand */}
        <path d="M58 340h25v25H58z" fill="#fff" stroke="#555" strokeWidth="2" strokeDasharray="6 3" />
        <HandShape color="#555" w={7} />
        <HandShape color="#fff" w={4.4} />
      </Marks>
      <Outline $x={189} $y={98} $w={96} $h={43} />
      <Outline $x={72} $y={271} $w={76} $h={66} />
      <Outline $x={577} $y={161} $w={62} $h={22} />
      <Outline $x={317} $y={70} $w={18} $h={18} />
      <Outline $x={317} $y={262} $w={18} $h={18} />
      <Outline $x={404} $y={255} $w={30} $h={30} />
      <Outline $x={407} $y={360} $w={18} $h={18} />
      <Note><p>Mirror These Settings:</p>- Bold<br />- Fill Color: #CCCCCC</Note>
      <Badge $x={74} $y={355}>1</Badge>
      <Badge $x={566} $y={185}>2</Badge>
      <Badge $x={298} $y={218}>3</Badge>
    </Page>
  );
}
